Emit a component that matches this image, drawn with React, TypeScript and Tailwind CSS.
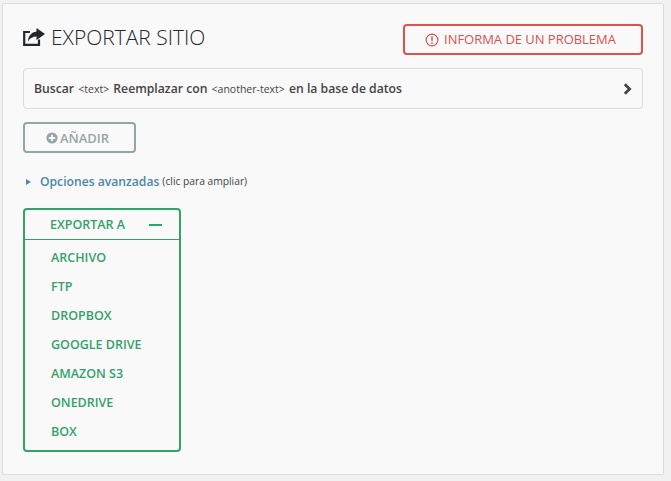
const sans = "font-['Open_Sans','Liberation_Sans',sans-serif]"

const exportTargets = ["ARCHIVO", "FTP", "DROPBOX", "GOOGLE DRIVE", "AMAZON S3", "ONEDRIVE", "BOX"]

function ShareIcon() {
  return (
    <svg width="22" height="18" viewBox="0 0 22 18" className="shrink-0 text-[#23282d]">
      <path d="M7 4H1.2V16.8H16V11.5" fill="none" stroke="currentColor" strokeWidth="2.2" />
      <path d="M13.5 0L22 6L13.5 12V8.6C10 8.6 7.2 10 5 13.4C5.2 8.2 8.4 4.2 13.5 3.6Z" fill="currentColor" />
    </svg>
  )
}

function AlertIcon() {
  return (
    <svg width="14" height="14" viewBox="0 0 14 14" className="shrink-0">
      <circle cx="7" cy="7" r="5.9" fill="none" stroke="currentColor" strokeWidth="1.2" />
      <path d="M7 3.5V8" stroke="currentColor" strokeWidth="1.5" />
      <path d="M7 9.2V10.8" stroke="currentColor" strokeWidth="1.5" />
    </svg>
  )
}

function PlusIcon() {
  return (
    <svg width="12" height="12" viewBox="0 0 12 12" className="shrink-0">
      <circle cx="6" cy="6" r="5.6" fill="currentColor" />
      <path d="M6 2.8V9.2M2.8 6H9.2" stroke="#f9f9f9" strokeWidth="1.8" />
    </svg>
  )
}

function Chevron() {
  return (
    <svg width="9" height="12" viewBox="0 0 9 12" className="shrink-0 text-[#444]">
      <path d="M1.8 1.2L6.6 6L1.8 10.8" fill="none" stroke="currentColor" strokeWidth="2.8" />
    </svg>
  )
}

export default function App() {
  return (
    <div className={`h-[481px] w-[671px] overflow-hidden bg-[#f1f1f1] pl-[2px] pt-[3px] ${sans}`}>
      <div className="h-[472px] w-[662px] rounded-[2px] border border-[#dddddd] bg-[#f9f9f9] pl-[20px] pr-[20px] pt-[20px]">
        <div className="flex h-[31px] items-start justify-between">
          <div className="flex h-[26px] items-center gap-[6px]">
            <ShareIcon />
            <h1 className="text-[21px] leading-[26px] font-light text-[#23282d]">EXPORTAR SITIO</h1>
          </div>
          <button className="flex h-[31px] w-[240px] items-center justify-center gap-[5px] rounded-[4px] border-2 border-[#d9534f] pr-[5px] text-[13px] font-normal tracking-[-0.03px] text-[#d9534f]">
            <AlertIcon />
            <span className="pt-[1px]">INFORMA DE UN PROBLEMA</span>
          </button>
        </div>

        <div className="mt-[13px] flex h-[41px] w-[620px] items-center justify-between rounded-[4px] border border-[#dddddd] pl-[10px] pr-[10px] pt-[1px] text-[12.2px] font-semibold text-[#444]">
          <span className="pt-[1px]">
            Buscar <span className="mx-[1px] text-[10.5px] font-normal">&lt;text&gt;</span> Reemplazar con{" "}
            <span className="mx-[1px] text-[10.5px] font-normal">&lt;another-text&gt;</span> en la base de datos
          </span>
          <Chevron />
        </div>

        <button className="mt-[13px] flex h-[31px] w-[113px] items-center justify-center gap-[2px] rounded-[4px] border-2 border-[#95a5a6] pr-[4px] pt-[1px] text-[13px] font-semibold text-[#95a5a6]">
          <PlusIcon />
          <span className="pt-[1px]">AÑADIR</span>
        </button>

        <div className="mt-[20px] flex h-[18px] items-center pl-[3px] text-[12.15px]">
          <span className="mr-[9px] h-0 w-0 border-y-[3px] border-l-[5px] border-y-transparent border-l-[#4a8cb0]" />
          <span className="font-semibold text-[#4a87a8]">Opciones avanzadas</span>
          <span className="ml-[3px] text-[10.25px] text-[#444]">(clic para ampliar)</span>
        </div>

        <div className="mt-[17px] h-[244px] w-[158px] rounded-[4px] border-2 border-[#34a268] text-[12.5px] text-[#34a268]">
          <div className="flex h-[30px] items-center justify-between border-b border-[#34a268] pl-[25px] pr-[5px]">
            <span className="pt-[2px] font-semibold">EXPORTAR A</span>
            <span className="mr-[12px] h-[2px] w-[13px] bg-[#34a268]" />
          </div>
          <ul className="pt-[4px]">
            {exportTargets.map((name) => (
              <li key={name} className="flex h-[29px] items-center pl-[26px] font-semibold">{name}</li>
            ))}
          </ul>
        </div>
      </div>
    </div>
  )
}
